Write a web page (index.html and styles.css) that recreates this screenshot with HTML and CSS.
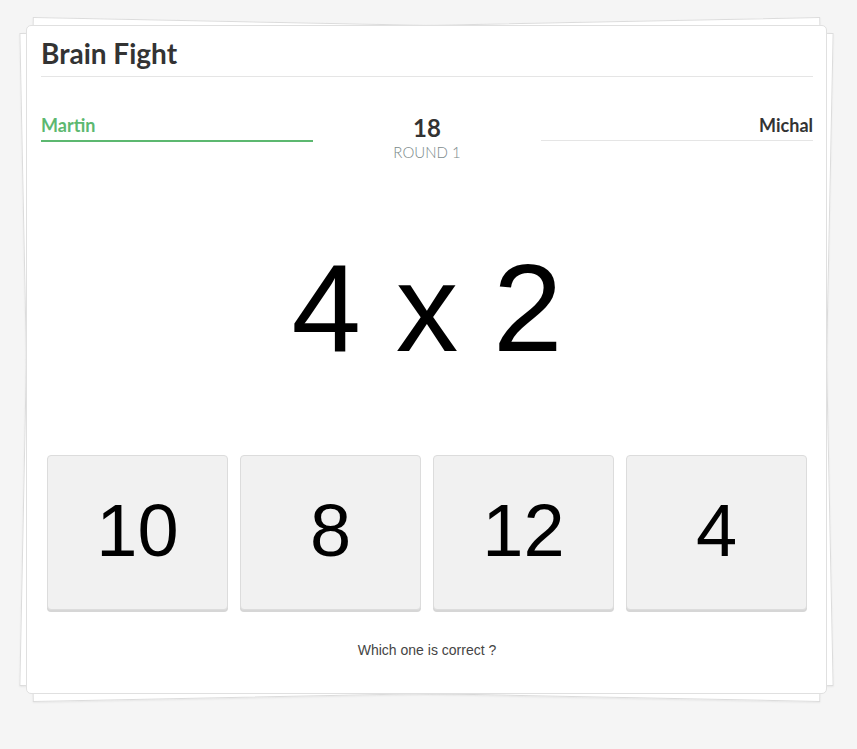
FILE: index.html
```html
<!DOCTYPE html>
<html lang="en">
<head>
<meta charset="utf-8">
<title>Brain Fight</title>
<link rel="stylesheet" href="styles.css">
</head>
<body>
<div class="page">
  <div class="card">
    <h1 class="title">Brain Fight</h1>
    <div class="players">
      <div class="player player-active">Martin</div>
      <div class="round">
        <div class="round-count">18</div>
        <div class="round-label">Round 1</div>
      </div>
      <div class="player player-right">Michal</div>
    </div>
    <div class="task">4 x 2</div>
    <div class="answers">
      <button class="answer">10</button>
      <button class="answer">8</button>
      <button class="answer">12</button>
      <button class="answer">4</button>
    </div>
    <p class="hint">Which one is correct ?</p>
  </div>
</div>
</body>
</html>
```
FILE: styles.css
```css
* { box-sizing: border-box; }

html {
  margin: 0;
  padding: 0;
  background: #f5f5f5;
}

body {
  margin: 0;
  padding: 0;
  font-family: "Lato", "Liberation Sans", Arial, sans-serif;
  color: #333;
}

.page {
  padding: 25px 30px 40px 26px;
}

.card {
  position: relative;
  background: #fff;
  border: 1px solid #e0e0e0;
  border-radius: 5px;
  padding: 0 13px 33px 14px;
}

.card::before,
.card::after {
  content: "";
  position: absolute;
  top: -1px;
  left: -1px;
  right: -1px;
  bottom: -1px;
  background: #fff;
  border: 1px solid #dcdcdc;
  box-shadow: 0 1px 2px rgba(0, 0, 0, 0.06);
  z-index: -1;
}

.card::before { transform: rotate(1.15deg); }
.card::after { transform: rotate(-1.15deg); }

.title {
  margin: 0;
  padding: 10px 0 6px;
  font-size: 28px;
  line-height: 34px;
  font-weight: 700;
  color: #333;
  border-bottom: 1px solid #e5e5e5;
}

.players {
  display: grid;
  grid-template-columns: 272px 1fr 272px;
  align-items: start;
  margin-top: 37px;
}

.player {
  font-size: 18px;
  line-height: 22px;
  font-weight: 700;
  padding-bottom: 4px;
  border-bottom: 1px solid #e5e5e5;
  color: #333;
}

.player-active {
  color: #5cb870;
  border-bottom: 2px solid #5cb870;
}

.player-right {
  text-align: right;
}

.round {
  text-align: center;
}

.round-count {
  font-size: 24px;
  line-height: 28px;
  font-weight: 700;
  color: #333;
}

.round-label {
  margin-top: 1px;
  font-size: 15px;
  line-height: 18px;
  font-weight: 300;
  text-transform: uppercase;
  color: #7b8a8b;
}

.task {
  margin-top: 84px;
  font-family: "Liberation Sans", Arial, sans-serif;
  font-size: 125px;
  line-height: 125px;
  text-align: center;
  color: #000;
}

.answers {
  display: grid;
  grid-template-columns: repeat(4, 1fr);
  gap: 12px;
  margin: 85px 6px 0;
}

.answer {
  display: block;
  width: 100%;
  margin: 0;
  padding: 38px 0 41px;
  font-family: "Liberation Sans", Arial, sans-serif;
  font-size: 74px;
  line-height: 74px;
  color: #000;
  background: #f1f1f1;
  border: 1px solid #dcdcdc;
  border-radius: 4px;
  box-shadow: 0 2px 0 #d6d6d6;
  text-align: center;
}

.hint {
  margin: 30px 0 0;
  font-family: "Liberation Sans", Arial, sans-serif;
  font-size: 14px;
  line-height: 20px;
  text-align: center;
  color: #444;
}
```
